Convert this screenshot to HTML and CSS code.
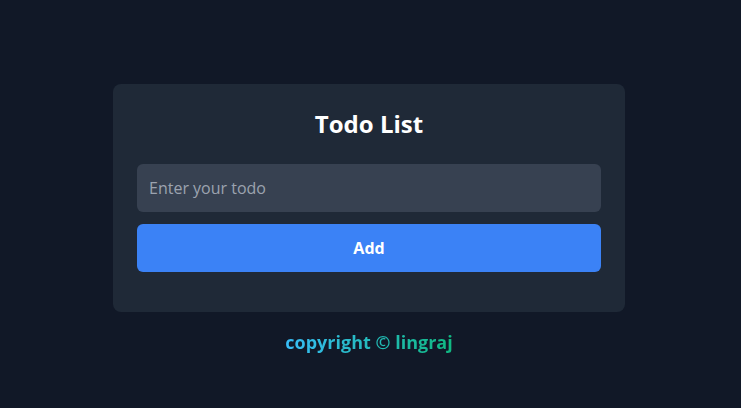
FILE: index.html
```html
<!DOCTYPE html>
<html lang="en">
<head>
<meta charset="utf-8">
<title>Todo List</title>
<link rel="stylesheet" href="styles.css">
</head>
<body>
<main class="page">
  <section class="card">
    <h1 class="title">Todo List</h1>
    <form class="form" onsubmit="return false">
      <input class="input" type="text" placeholder="Enter your todo">
      <button class="btn" type="submit">Add</button>
    </form>
    <ul class="list"></ul>
  </section>
  <p class="footer">copyright © lingraj</p>
</main>
</body>
</html>
```
FILE: styles.css
```css
* { box-sizing: border-box; }
html, body {
  margin: 0;
  height: 100%;
  background: #111827;
  font-family: "Open Sans", "Noto Sans", sans-serif;
  color: #fff;
}
.page {
  display: flex;
  flex-direction: column;
  align-items: center;
  padding: 84px 3px 0 0;
}
.card {
  width: 512px;
  background: #1f2937;
  border-radius: 8px;
  padding: 24px 24px 40px;
}
.title {
  margin: 0 0 24px;
  text-align: center;
  font-size: 24px;
  line-height: 32px;
  font-weight: 700;
}
.form {
  display: flex;
  flex-direction: column;
  gap: 12px;
}
.input {
  height: 48px;
  border: none;
  border-radius: 6px;
  background: #374151;
  color: #fff;
  padding: 0 12px;
  font-family: inherit;
  font-size: 16px;
  outline: none;
}
.input::placeholder { color: #9ca3af; }
.btn {
  height: 48px;
  border: none;
  border-radius: 6px;
  background: #3b82f6;
  color: #fff;
  font-family: inherit;
  font-size: 16px;
  font-weight: 700;
  cursor: pointer;
}
.list { margin: 0; padding: 0; list-style: none; }
.footer {
  margin: 16px 0 0;
  font-size: 18px;
  line-height: 28px;
  font-weight: 700;
  background: linear-gradient(to right, #38bdf8, #10b981);
  -webkit-background-clip: text;
  background-clip: text;
  color: transparent;
}
```
